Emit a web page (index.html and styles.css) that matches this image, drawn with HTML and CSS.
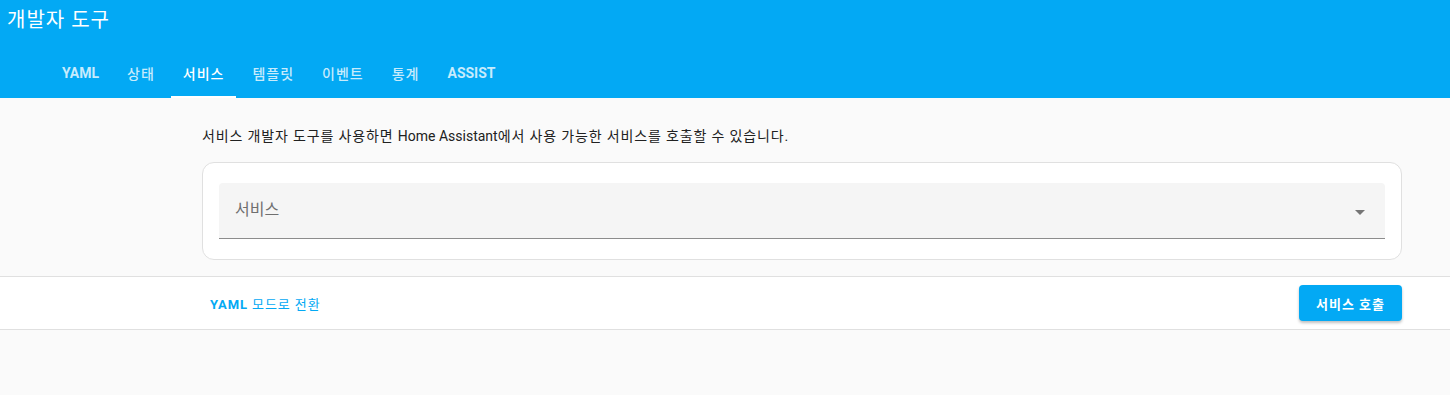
FILE: index.html
```html
<!DOCTYPE html>
<html lang="ko">
    <head>
        <meta charset="UTF-8">
        <title>개발자 도구</title>
        <link rel="stylesheet" href="styles.css">
    </head>
    <body>
        <header class="toolbar">
            <div class="title">개발자 도구</div>
            <nav class="tabs">
                <a class="tab latin">YAML</a>
                <a class="tab">상태</a>
                <a class="tab active">서비스</a>
                <a class="tab">템플릿</a>
                <a class="tab">이벤트</a>
                <a class="tab">통계</a>
                <a class="tab latin">ASSIST</a>
            </nav>
        </header>

        <main class="content">
            <p class="description">서비스 개발자 도구를 사용하면 <span class="latin-text">Home Assistant</span>에서 사용 가능한 서비스를 호출할 수 있습니다.</p>
            <div class="card">
                <div class="select">
                    <span class="select-label">서비스</span>
                    <span class="arrow"></span>
                </div>
            </div>
        </main>

        <div class="button-bar">
            <div class="button-row">
                <button type="button" class="link-button"><b>YAML</b> 모드로 전환</button>
                <button type="button" class="call-button">서비스 호출</button>
            </div>
        </div>
    </body>
</html>
```

FILE: styles.css
```css
body {
    margin: 0;
    background: #fafafa;
    font-family: Roboto, "Noto Sans CJK KR", sans-serif;
    color: #212121;
}

.toolbar {
    background: #03a9f4;
    color: #fff;
    height: 98px;
    display: flex;
    flex-direction: column;
}

.title {
    font-size: 20px;
    line-height: 40px;
    padding-left: 7px;
    letter-spacing: 1px;
}

.tabs {
    display: flex;
    gap: 4px;
    margin-top: 9px;
    padding-left: 50px;
    height: 49px;
}

.tab {
    display: flex;
    align-items: center;
    padding: 0 12px;
    font-size: 14px;
    font-weight: 500;
    letter-spacing: 1px;
    color: rgba(255, 255, 255, 0.78);
    border-bottom: 2px solid transparent;
    box-sizing: border-box;
}

.tab.latin {
    font-weight: 700;
    letter-spacing: 0;
}

.tab.active {
    color: #fff;
    border-bottom-color: #fff;
}

.content {
    margin-left: 202px;
    width: 1200px;
    padding-top: 28px;
    padding-bottom: 16px;
}

.description {
    margin: 0 0 16px;
    font-size: 14px;
    line-height: 20px;
    letter-spacing: 0.85px;
}

.latin-text {
    letter-spacing: 0;
}

.card {
    background: #fff;
    border: 1px solid #e0e0e0;
    border-radius: 12px;
    padding: 20px 16px;
}

.select {
    height: 56px;
    background: #f5f5f5;
    border-bottom: 1px solid #8c8c8c;
    border-radius: 4px 4px 0 0;
    box-sizing: border-box;
    display: flex;
    align-items: center;
    justify-content: space-between;
    padding: 0 20px 0 16px;
}

.select-label {
    font-size: 16px;
    color: #6f6f6f;
    margin-top: -5px;
}

.arrow {
    width: 0;
    height: 0;
    border-left: 5px solid transparent;
    border-right: 5px solid transparent;
    border-top: 5px solid #757575;
    margin-top: 3px;
}

.button-bar {
    background: #fff;
    border-top: 1px solid #e0e0e0;
    border-bottom: 1px solid #e0e0e0;
}

.button-row {
    margin-left: 202px;
    width: 1200px;
    height: 52px;
    display: flex;
    align-items: center;
    justify-content: space-between;
}

.link-button {
    background: none;
    border: 0;
    color: #03a9f4;
    font-family: inherit;
    font-size: 13px;
    letter-spacing: 0.9px;
    padding: 0 8px;
    height: 36px;
}

.link-button b {
    font-weight: 700;
}

.call-button {
    background: #03a9f4;
    color: #fff;
    border: 0;
    border-radius: 4px;
    font-family: inherit;
    font-size: 13px;
    font-weight: 700;
    letter-spacing: 1px;
    width: 103px;
    height: 36px;
    box-shadow: 0 2px 3px rgba(0, 0, 0, 0.25);
}
```
